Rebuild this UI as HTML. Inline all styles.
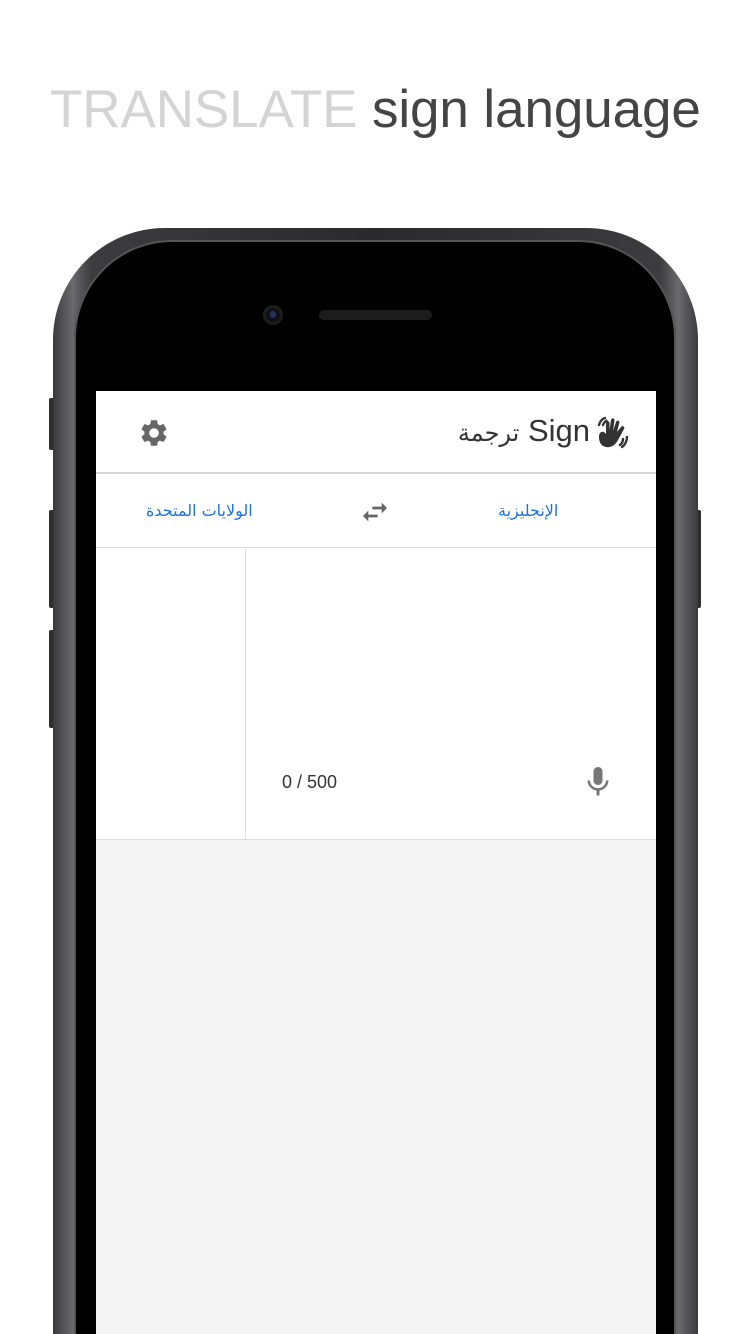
<!DOCTYPE html>
<html><head><meta charset="utf-8">
<style>
*{margin:0;padding:0;box-sizing:border-box}
html,body{width:750px;height:1334px;overflow:hidden;background:#fff;font-family:"Liberation Sans","Noto Sans CJK SC",sans-serif;position:relative}
.title{position:absolute;left:50px;top:79px;font-size:53px;white-space:nowrap;letter-spacing:-0.1px}
.title .a{color:#d4d4d4}.title .b{color:#444}
.body{position:absolute;left:53px;top:228px;width:645px;height:1106px;border-radius:112px 112px 0 0;background:linear-gradient(90deg,#3a3a3d 0,#6a6a6d 3%,#3c3c3f 6%,#2a2a2c 50%,#3c3c3f 94%,#6a6a6d 97%,#3a3a3d 100%);}
.inner{position:absolute;left:76px;top:242px;width:598px;height:1092px;border-radius:96px 96px 0 0;background:#000;box-shadow:0 0 0 2px #555}
.btn{position:absolute;background:#2e2e30;border-radius:2px}
.screen{position:absolute;left:96px;top:391px;width:560px;height:943px;background:#f4f4f4}
.hdr{position:absolute;left:0;top:0;width:560px;height:83px;background:#fff;border-bottom:2px solid #d6d6d6}
.lang{position:absolute;left:0;top:83px;width:560px;height:74px;background:#fff;border-bottom:1px solid #e0e0e0}
.inp{position:absolute;left:0;top:157px;width:560px;height:292px;background:#fff;border-bottom:1px solid #dcdcdc}
.ar{font-family:"DejaVu Sans",sans-serif}
</style></head><body>
<div class="title"><span class="a">TRANSLATE</span> <span class="b">sign language</span></div>

<div class="btn" style="left:49px;top:398px;width:6px;height:52px"></div>
<div class="btn" style="left:49px;top:510px;width:6px;height:98px"></div>
<div class="btn" style="left:49px;top:630px;width:6px;height:98px"></div>
<div class="btn" style="left:695px;top:510px;width:6px;height:98px"></div>
<div class="body"></div>
<div class="inner"></div>
<div style="position:absolute;left:263px;top:305px;width:20px;height:20px;border-radius:50%;background:#111;box-shadow:inset 0 0 0 3px #1c1c1e"><div style="position:absolute;left:7px;top:6px;width:6px;height:7px;border-radius:50%;background:#22336a"></div></div>
<div style="position:absolute;left:319px;top:310px;width:113px;height:10px;border-radius:5px;background:#1c1c1c"></div>

<div class="screen">
 <div class="hdr">
  <svg style="position:absolute;left:42px;top:26px" width="32" height="32" viewBox="0 0 24 24"><path fill="#666" d="M19.14 12.94c.04-.3.06-.61.06-.94 0-.32-.02-.64-.07-.94l2.030-1.58a.49.49 0 0 0 .12-.61l-1.92-3.320a.488.488 0 0 0-.59-.22l-2.39.96c-.5-.38-1.03-.7-1.62-.94l-.36-2.54a.484.484 0 0 0-.48-.41h-3.84c-.24 0-.43.17-.47.41l-.36 2.54c-.59.24-1.13.57-1.62.94l-2.39-.96c-.22-.08-.47 0-.59.22L2.74 8.87c-.12.21-.08.47.12.61l2.03 1.58c-.05.3-.09.63-.09.94s.2.64.07.94l-2.03 1.58a.49.49 0 0 0-.12.61l1.92 3.32c.12.22.37.29.59.22l2.39-.96c.5.38 1.03.7 1.62.94l.36 2.54c.05.24.24.41.48.41h3.84c.24 0 .44-.17.47-.41l.36-2.54c.59-.24 1.130-.56 1.62-.94l2.39.96c.22.08.47 0 .59-.22l1.92-3.32c.12-.22.07-.47-.12-.61l-2.01-1.58zM12 15.6c-1.98 0-3.6-1.62-3.6-3.6s1.62-3.6 3.6-3.6 3.6 1.62 3.6 3.6-1.62 3.6-3.6 3.6z"/></svg>
  <div style="position:absolute;right:66px;top:22px;font-size:31px;color:#333;white-space:nowrap"><span class="ar" style="font-size:24px">ترجمة</span> Sign</div>
  <svg style="position:absolute;left:498px;top:24px" width="38" height="36" viewBox="0 0 38 36"><path fill="#333" d="M5 22c0-4 2-6 5-5l2 2V8c0-2.5 3.5-2.5 3.5 0v7l1.5-10c.4-2.5 3.8-2 3.5.5L19 16l3-9c.8-2.3 4-1.4 3.3 1L23 17l4-5c1.5-2 4.3-.3 3 2l-6 11c-2.5 5-7 8-12 7-5-1-7-5-7-10z"/><path d="M5 10c1-4 3-6 6-7M9 10c.7-2 1.8-3.3 3.5-4.3M33 22c0 4-2 8-5 10M29 24c0 2.4-1 4.5-3 6" stroke="#333" stroke-width="2.4" fill="none" stroke-linecap="round"/></svg>
 </div>
 <div class="lang">
  <div class="ar" style="position:absolute;left:50px;top:27px;font-size:16px;color:#1a73e8">الولايات المتحدة</div>
  <svg style="position:absolute;left:263px;top:22px" width="32" height="32" viewBox="0 0 24 24"><path fill="#666" d="M6.99 11L3 15l3.99 4v-3H14v-2H6.99v-3zM21 9l-3.99-4v3H10v2h7.01v3L21 9z"/></svg>
  <div class="ar" style="position:absolute;left:402px;top:27px;font-size:16px;color:#1a73e8">الإنجليزية</div>
 </div>
 <div class="inp">
  <div style="position:absolute;left:149px;top:0;width:1px;height:292px;background:#e0e0e0"></div>
  <div style="position:absolute;left:186px;top:224px;font-size:18px;color:#333">0 / 500</div>
  <svg style="position:absolute;left:484px;top:216px" width="36" height="36" viewBox="0 0 24 24"><path fill="#777" d="M12 14c1.66 0 3-1.34 3-3V5c0-1.66-1.34-3-3-3S9 3.34 9 5v6c0 1.66 1.34 3 3 3zm5.3-3c0 3-2.54 5.1-5.3 5.1S6.7 14 6.7 11H5c0 3.41 2.72 6.23 6 6.72V21h2v-3.28c3.28-.48 6-3.3 6-6.72h-1.7z"/></svg>
 </div>
</div>
</body></html>
